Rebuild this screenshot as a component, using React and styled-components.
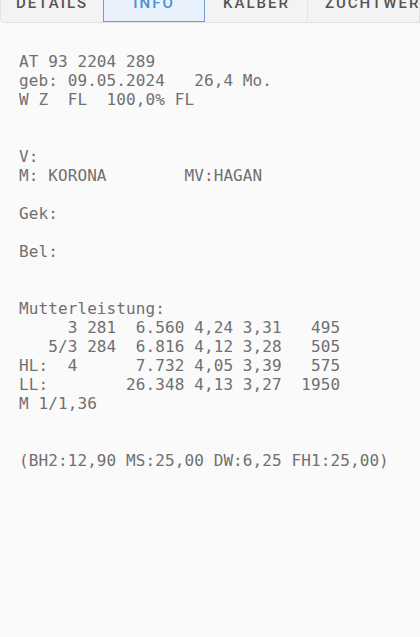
import React from "react";
import styled, { createGlobalStyle } from "styled-components";

const GlobalStyle = createGlobalStyle`
  html, body {
    margin: 0;
    padding: 0;
    background: #fafafa;
  }
  body {
    font-family: "Roboto", "Liberation Sans", sans-serif;
  }
`;

const Page = styled.div`
  width: 420px;
  height: 637px;
  overflow: hidden;
  background: #fafafa;
`;

const TabBar = styled.div`
  display: flex;
  margin-top: -16px;
  height: 39px;
  background: #f3f3f3;
  border: 1px solid #e0e0e0;
  border-top: none;
  border-radius: 0 0 0 5px;
  overflow: hidden;
  box-sizing: border-box;
`;

const Tab = styled.div`
  flex-shrink: 0;
  min-width: ${(p) => p.$width || 102}px;
  box-sizing: border-box;
  padding: 0 12px;
  display: flex;
  align-items: center;
  justify-content: center;
  font-size: 15px;
  font-weight: 500;
  letter-spacing: 2px;
  white-space: nowrap;
  color: ${(p) => (p.$active ? "#4a8fd6" : "#555")};
  background: ${(p) => (p.$active ? "#e9f2fc" : "transparent")};
  border: 1px solid ${(p) => (p.$active ? "#6b9fd8" : "transparent")};
  border-right: 1px solid ${(p) => (p.$active ? "#6b9fd8" : p.$sep ? "#e3e3e3" : "transparent")};
`;

const Content = styled.pre`
  margin: 0;
  padding: 29px 19px 0 19px;
  font-family: "DejaVu Sans Mono", "Liberation Mono", monospace;
  font-size: 16px;
  letter-spacing: 0.1px;
  line-height: 19px;
  color: #707070;
  white-space: pre;
`;

const tabs = [
  { label: "DETAILS", width: 102 },
  { label: "INFO", width: 102, active: true },
  { label: "KÄLBER", width: 103, sep: true },
  { label: "ZUCHTWERT", width: 140 },
];

const lines = [
  "AT 93 2204 289",
  "geb: 09.05.2024   26,4 Mo.",
  "W Z  FL  100,0% FL",
  "",
  "",
  "V:",
  "M: KORONA        MV:HAGAN",
  "",
  "Gek:",
  "",
  "Bel:",
  "",
  "",
  "Mutterleistung:",
  "     3 281  6.560 4,24 3,31   495",
  "   5/3 284  6.816 4,12 3,28   505",
  "HL:  4      7.732 4,05 3,39   575",
  "LL:        26.348 4,13 3,27  1950",
  "M 1/1,36",
  "",
  "",
  "(BH2:12,90 MS:25,00 DW:6,25 FH1:25,00)",
];

export default function App() {
  return (
    <Page>
      <GlobalStyle />
      <TabBar>
        {tabs.map((t) => (
          <Tab key={t.label} $active={t.active} $sep={t.sep} $width={t.width}>
            {t.label}
          </Tab>
        ))}
      </TabBar>
      <Content>{lines.join("\n")}</Content>
    </Page>
  );
}
